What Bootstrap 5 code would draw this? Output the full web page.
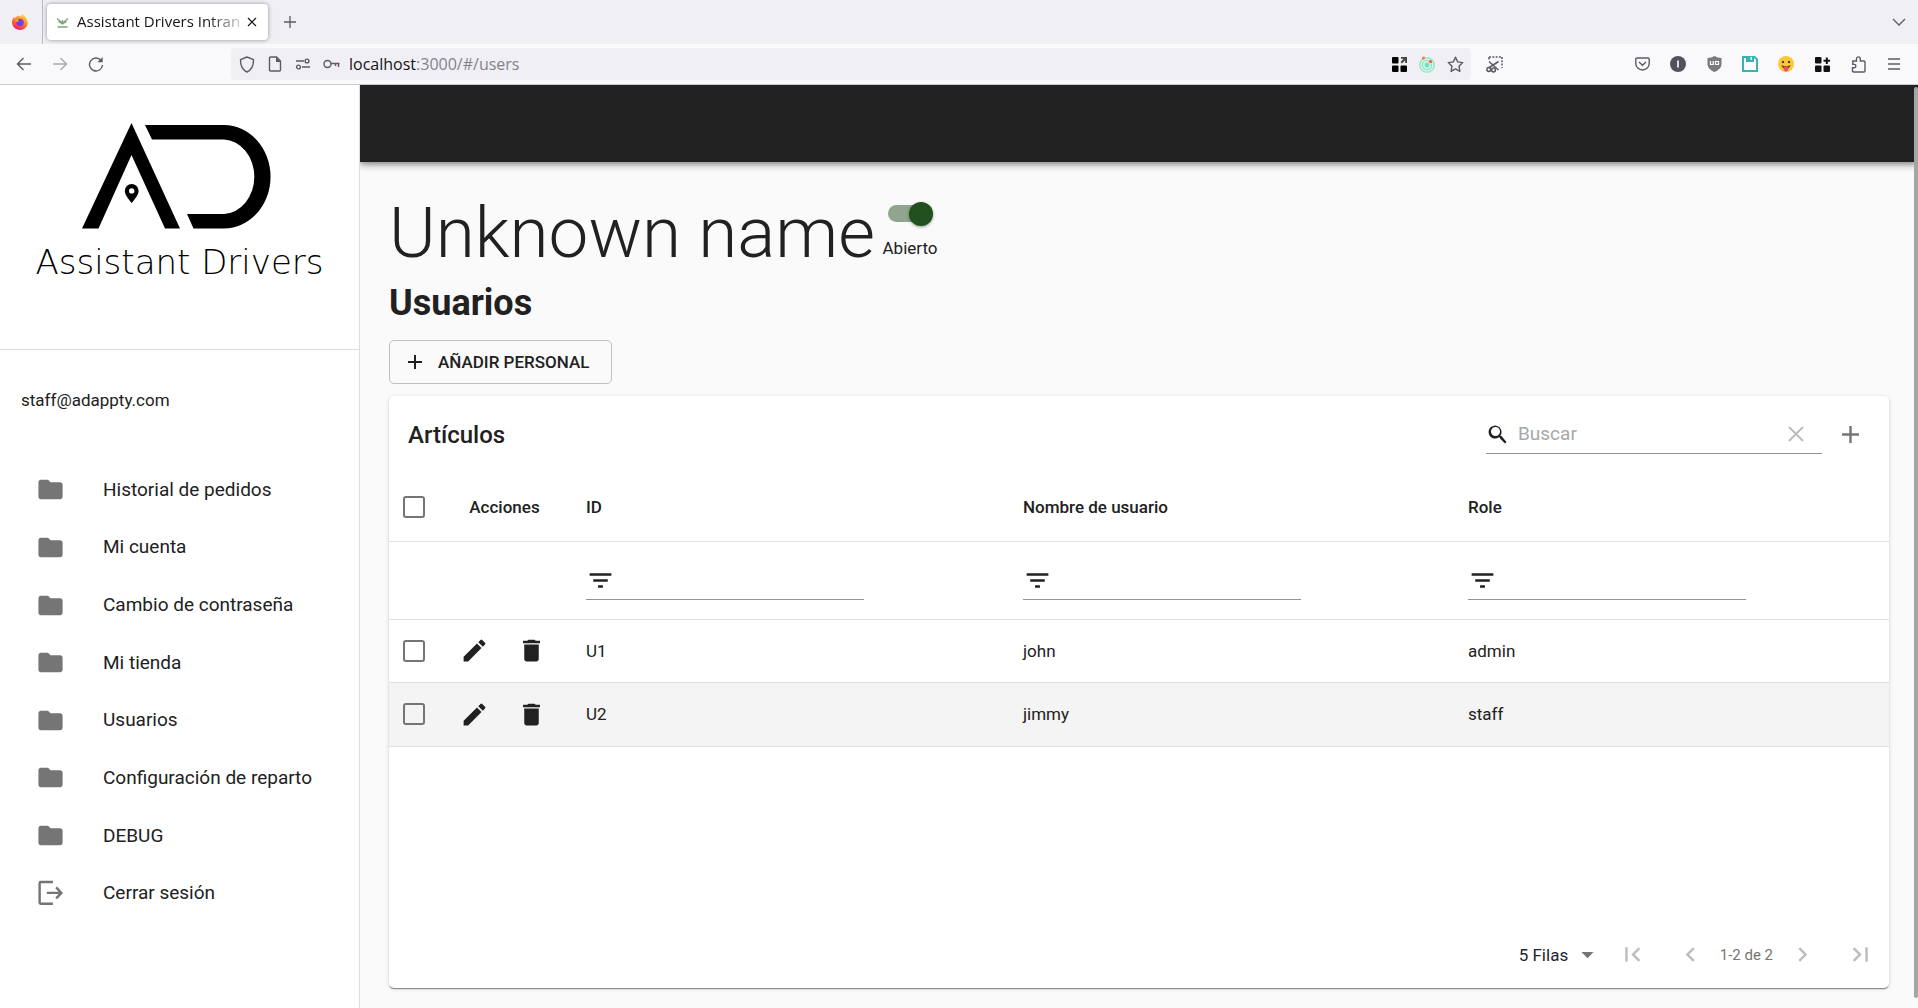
<!DOCTYPE html>
<html lang="es">
<head>
<meta charset="utf-8">
<meta name="viewport" content="width=device-width, initial-scale=1">
<title>Assistant Drivers Intranet</title>
<link href="https://cdn.jsdelivr.net/npm/bootstrap@5.3.0/dist/css/bootstrap.min.css" rel="stylesheet">
<style>
  body { font-family: Roboto, "Liberation Sans", sans-serif; font-size: 17px; line-height: 24px; color: #212121; background: #fafafa; }
  button { font: inherit; color: inherit; }
  svg { display: block; flex: none; }
  .plain-btn { border: 0; background: none; padding: 0; display: flex; align-items: center; justify-content: center; }

  /* Browser frame */
  .browser { font-family: "Open Sans", "Noto Sans", sans-serif; color: #15141a; }
  .tabstrip { height: 44px; background: #f0eff4; }
  .pinned { width: 43px; border-right: 1px solid #b9b9c0; padding-left: 11px; }
  .tab { width: 221px; height: 36px; margin-left: 4px; background: #fff; border-radius: 4px; box-shadow: 0 0 4px rgba(0,0,0,.4); padding: 0 9px; }
  .tab-title { margin-left: 8px; padding-bottom: 2px; font-size: 15px; -webkit-mask-image: linear-gradient(90deg, #000 80%, transparent 105%); mask-image: linear-gradient(90deg, #000 80%, transparent 105%); }
  .toolbar { height: 41px; background: #f9f9fb; border-bottom: 1px solid #ccccd0; }
  .slot { width: 36px; height: 36px; color: #5b5b66; }
  .slot-sm { width: 28px; height: 32px; color: #5b5b66; }
  .nav-tools { width: 231px; padding-left: 6px; }
  .urlbar { height: 32px; background: #f0eff4; border-radius: 4px; margin-right: 5px; padding: 0 2px; }
  .url-field { font-size: 16px; color: #84838c; padding-left: 4px; }
  .url-field b { font-weight: 400; color: #15141a; }
  .ext-tools { margin-left: 112px; padding-right: 6px; }

  /* Sidebar */
  .sidebar { width: 360px; background: #fff; border-right: 1px solid #dedede; }
  .brand { height: 265px; border-bottom: 1px solid #dedede; padding: 37px 0 0; }
  .brand-name { font-family: "DejaVu Sans Light", "DejaVu Sans", sans-serif; font-weight: 200; font-size: 34px; line-height: 40px; margin-top: 12px; color: #000; }
  .user-mail { padding: 38px 21px 49px; }
  .menu { height: 461px; display: grid; grid-auto-rows: 1fr; }
  .menu a { color: #212121; text-decoration: none; font-size: 19px; padding-left: 36px; height: 100%; }
  .menu svg { color: #757575; margin-right: 38px; }

  /* Main */
  .appbar { height: 77px; background: #212121; box-shadow: 0 2px 5px rgba(0,0,0,.3), 0 4px 8px rgba(0,0,0,.2); clip-path: inset(0 0 -16px 0); }
  .content { padding: 28px 29px 20px; }
  .shop-name { font-size: 71px; line-height: 86px; font-weight: 300; margin: 0; }
  .switch-box { width: 70px; padding-top: 11px; }
  .switch { appearance: none; width: 45px; height: 17px; margin: 4px 0; border-radius: 9px; background: #8fa58d; display: flex; align-items: center; justify-content: flex-end; }
  .switch::before { content: ""; width: 24px; height: 24px; flex: none; border-radius: 50%; background: #21501e; box-shadow: 0 1px 3px rgba(0,0,0,.4); }
  .switch-label { margin-top: 10px; }
  .section-title { font-size: 36px; line-height: 43px; font-weight: 700; margin: 6px 0 15px; }
  .add-btn { height: 44px; border: 1px solid #c0c0c0; border-radius: 5px; background: none; font-weight: 500; padding: 0 22px 0 13px; gap: 11px; }
  .panel { margin-top: 12px; background: #fff; border-radius: 5px; box-shadow: 0 2px 1px -1px rgba(0,0,0,.3), 0 1px 1px rgba(0,0,0,.18), 0 1px 4px rgba(0,0,0,.15); }
  .panel-head { height: 77px; padding: 0 24px 0 19px; }
  .panel-title { font-size: 24px; line-height: 30px; font-weight: 500; margin: 0; }
  .line-field { border-bottom: 1px solid #949494; height: 38px; }
  .line-field input { border: 0; outline: 0; background: none; padding: 0; min-width: 0; flex: 1; font-size: 19px; }
  .line-field input::placeholder { color: #a8a8a8; opacity: 1; }
  .search { width: 336px; padding-right: 14px; margin-right: 14px; }
  .filter { width: 278px; margin-top: 2px; }
  .grey-icon { color: #757575; }
  .users { width: 100%; table-layout: fixed; }
  .users th, .users td { padding: 0 19px; border-bottom: 1px solid #e0e0e0; }
  .users th { height: 68px; font-weight: 500; }
  .users .filters td { height: 78px; }
  .users .person td { height: 63px; }
  .users .person:last-child td { height: 64px; background: #f4f4f4; }
  .users .pick { padding: 0 0 0 14px; }
  .users .acts { padding: 0 0 0 3px; }
  .tick { appearance: none; display: block; width: 22px; height: 22px; border: 2px solid #757575; border-radius: 3px; margin: 0; }
  .act { width: 57px; height: 48px; }
  .rows-select { appearance: none; border: 0; background: none; font: inherit; color: inherit; padding: 0; width: 54px; }
  .pager { height: 67px; color: #bdbdbd; padding-right: 14px; }
  .step-gap { width: 29px; }
  .page-info { font-size: 15px; color: #757575; margin: 0 15px; }
  .scroll-thumb { right: 0; top: 87px; bottom: 10px; width: 4px; background: #a5a5a5; border-radius: 2px; }
</style>
</head>
<body>
<svg class="d-none" aria-hidden="true">
  <symbol id="folder" viewBox="0 0 24 24"><path fill="currentColor" d="M10 4H4c-1.100 0-1.990.9-1.990 2L2 18c0 1.100.9 2 2 2h16c1.100 0 2-.9 2-2V8c0-1.100-.9-2-2-2h-8l-2-2z"/></symbol>
  <symbol id="edit" viewBox="0 0 24 24"><path fill="currentColor" d="M3 17.250V21h3.750L17.810 9.940l-3.750-3.750L3 17.250zM20.710 7.040a1 1 0 0 0 0-1.410l-2.340-2.340a1 1 0 0 0-1.410 0l-1.830 1.830 3.750 3.750 1.830-1.830z"/></symbol>
  <symbol id="trash" viewBox="0 0 24 24"><path fill="currentColor" d="M6 19c0 1.100.9 2 2 2h8c1.100 0 2-.9 2-2V7H6v12zM19 4h-3.500l-1-1h-5l-1 1H5v2h14V4z"/></symbol>
  <symbol id="plus" viewBox="0 0 24 24"><path fill="currentColor" d="M19 13h-6v6h-2v-6H5v-2h6V5h2v6h6v2z"/></symbol>
  <symbol id="filter" viewBox="0 0 24 24"><path fill="currentColor" d="M10 18h4v-2h-4v2zM3 6v2h18V6H3zm3 7h12v-2H6v2z"/></symbol>
  <symbol id="left" viewBox="0 0 24 24"><path fill="currentColor" d="M15.410 7.410 14 6l-6 6 6 6 1.410-1.410L10.830 12z"/></symbol>
  <symbol id="right" viewBox="0 0 24 24"><path fill="currentColor" d="M10 6 8.590 7.410 13.170 12l-4.580 4.590L10 18l6-6z"/></symbol>
  <symbol id="first" viewBox="0 0 24 24"><path fill="currentColor" d="M18.410 16.590 13.820 12l4.590-4.590L17 6l-6 6 6 6zM6 6h2v12H6z"/></symbol>
  <symbol id="last" viewBox="0 0 24 24"><path fill="currentColor" d="M5.590 7.410 10.180 12l-4.590 4.590L7 18l6-6-6-6zM16 6h2v12h-2z"/></symbol>
</svg>

<div class="min-vh-100 d-flex flex-column position-relative">
  <header class="browser">
    <div class="tabstrip d-flex align-items-center">
      <div class="pinned h-100 d-flex align-items-center">
        <svg width="18" height="18" viewBox="0 0 18 18"><defs><linearGradient id="fx" x1=".8" y1="0" x2=".3" y2="1"><stop offset="0" stop-color="#ffe83a"/><stop offset=".45" stop-color="#ff8a1e"/><stop offset="1" stop-color="#f5156c"/></linearGradient></defs><path fill="url(#fx)" d="M11 1c2 1.500 5 4.200 5.600 7.500.7 4.800-2.900 8.500-7.400 8.500C4.600 17 1 13.700 1 9.300c0-2.400.9-4.200 2-5.600l.6 1.700L6 3.200c1-.6 2.800-.4 4.200.6C10.200 2.700 10.400 1.700 11 1z"/><circle cx="9" cy="9.500" r="3.700" fill="#7a3be0"/><path fill="#ff9a20" d="M3.800 7c1.600-1.500 3.200-.8 4.800.2-1.300.2-1.600 1-1.300 1.800-2 0-3.200-.6-3.500-2z"/></svg>
      </div>
      <div class="tab d-flex align-items-center">
        <svg width="13" height="13" viewBox="0 0 13 13" fill="none" stroke="#7fa57c"><path d="M1 2.500 4 5l2.500 2.500L9 5l3-2.500M2.500 5.500 6.500 8l4-2.500M6.500 4v4" stroke-width="1.300"/><path d="M1.500 11h10" stroke-width="1.500"/></svg>
        <div class="tab-title text-nowrap">Assistant Drivers Intran</div>
        <button class="plain-btn ms-auto" aria-label="Cerrar pestaña"><svg width="14" height="14" viewBox="0 0 14 14" stroke="#15141a" stroke-width="1.200"><path d="m3 3 8 8M11 3l-8 8"/></svg></button>
      </div>
      <button class="plain-btn slot ms-1" aria-label="Nueva pestaña"><svg width="14" height="14" viewBox="0 0 14 14" stroke="currentColor" stroke-width="1.300"><path d="M1 7h12M7 1v12"/></svg></button>
      <button class="plain-btn slot ms-auto" aria-label="Lista de pestañas"><svg width="16" height="16" viewBox="0 0 16 16" fill="none" stroke="currentColor" stroke-width="1.300"><path d="m1 5 6 6 6-6"/></svg></button>
    </div>
    <div class="toolbar d-flex align-items-center">
      <div class="nav-tools d-flex">
        <button class="plain-btn slot" aria-label="Atrás"><svg width="16" height="16" viewBox="0 0 16 16" fill="none" stroke="currentColor" stroke-width="1.400"><path d="M15 8H1.500M7.500 2l-6 6 6 6"/></svg></button>
        <button class="plain-btn slot opacity-50" aria-label="Adelante"><svg width="16" height="16" viewBox="0 0 16 16" fill="none" stroke="currentColor" stroke-width="1.400"><path d="M1 8h13.500M8.500 2l6 6-6 6"/></svg></button>
        <button class="plain-btn slot" aria-label="Recargar"><svg width="16" height="16" viewBox="0 0 16 16" fill="none" stroke="currentColor" stroke-width="1.400"><path d="M13.500 5A6.500 6.500 0 1 0 14.500 9"/><path d="M14.700 1v5.300H9.400z" fill="currentColor" stroke="none"/></svg></button>
      </div>
      <div class="urlbar flex-grow-1 d-flex align-items-center">
        <span class="plain-btn slot-sm"><svg width="16" height="17" viewBox="0 0 16 17" fill="none" stroke="currentColor" stroke-width="1.400"><path d="M8 1 14.500 3.700C14.600 9 13 13.500 8 16 3 13.500 1.400 9 1.500 3.700z" stroke-linejoin="round"/></svg></span>
        <span class="plain-btn slot-sm"><svg width="14" height="16" viewBox="0 0 14 16" fill="none" stroke="currentColor" stroke-width="1.400"><path d="M2.500 1h6L12.500 5v9q0 1-1 1h-9q-1 0-1-1V2q0-1 1-1z"/><path d="M8 1v5h5z" fill="currentColor" stroke="none"/></svg></span>
        <span class="plain-btn slot-sm"><svg width="16" height="14" viewBox="0 0 16 14" fill="none" stroke="currentColor" stroke-width="1.400"><path d="M1 4h8M7 10h8"/><circle cx="12" cy="4" r="1.900"/><circle cx="3.500" cy="10" r="1.900"/></svg></span>
        <span class="plain-btn slot-sm"><svg width="17" height="10" viewBox="0 0 17 10" fill="none" stroke="currentColor" stroke-width="1.400"><circle cx="4.500" cy="5" r="3.500"/><path d="M8 4.500h8.500M15.500 4.500v3.500M12.500 4.500V7"/></svg></span>
        <div class="url-field"><b>localhost</b>:3000/#/users</div>
        <button class="plain-btn slot-sm ms-auto" aria-label="Abrir en cuadrícula"><svg width="15" height="15" viewBox="0 0 15 15" fill="#000"><rect width="6.500" height="6.500" rx="1"/><rect y="8.500" width="6.500" height="6.500" rx="1"/><rect x="8.500" y="8.500" width="6.500" height="6.500" rx="1"/><path d="M9 0h6v6h-1.800V3.200L10 6.500 8.600 5l3-3.200H9z" fill="#444"/></svg></button>
        <button class="plain-btn slot-sm" aria-label="Radar"><svg width="16" height="17" viewBox="0 0 16 17" fill="none" stroke="#7deabc" stroke-width="1.300"><circle cx="8" cy="9" r="7.200"/><circle cx="8" cy="9" r="4.600"/><circle cx="8" cy="9" r="2" fill="#5fe6ae"/><circle cx="4.500" cy="2" r="1.600" fill="#ff7a45" stroke="none"/><circle cx="11.500" cy="5.500" r="1.600" fill="#ff5040" stroke="none"/></svg></button>
        <button class="plain-btn slot-sm" aria-label="Marcador"><svg width="17" height="17" viewBox="0 0 17 17" fill="none" stroke="currentColor" stroke-width="1.400" stroke-linejoin="round"><path d="m8.500 1.200 2.200 4.700 5 .7-3.700 3.600.9 5.200-4.400-2.500-4.400 2.500.9-5.200L1.300 6.600l5-.7z"/></svg></button>
      </div>
      <button class="plain-btn slot" aria-label="Captura"><svg width="17" height="17" viewBox="0 0 17 17" fill="none" stroke="currentColor" stroke-width="1.500"><path d="M3 1h13M16 1v11" stroke-dasharray="2 1.300"/><path d="M3 5.500 12.500 14M2.500 12 12.500 5.500"/><circle cx="2.800" cy="13.500" r="1.900"/><circle cx="7.500" cy="14" r="1.900"/><path d="M3 1v2.500"/></svg></button>
      <div class="ext-tools d-flex">
        <button class="plain-btn slot" aria-label="Pocket"><svg width="15" height="14" viewBox="0 0 15 14" fill="none" stroke="currentColor" stroke-width="1.400"><path d="M2 1h11q1.200 0 1.200 1.200V6.500a6.700 6.500 0 0 1-13.400 0V2.200Q.8 1 2 1z"/><path d="m4 5 3.500 3.300L11 5"/></svg></button>
        <button class="plain-btn slot" aria-label="Información"><svg width="16" height="16" viewBox="0 0 16 16"><circle cx="8" cy="8" r="8" fill="#52525e"/><path d="M8 4.500v7" stroke="#fff" stroke-width="1.600"/></svg></button>
        <button class="plain-btn slot" aria-label="Bloqueador"><svg width="15" height="16" viewBox="0 0 15 16"><path fill="#7b7b7b" d="M7.500 0q3 2 7 2v6c0 4-3.500 6.500-7 8-3.500-1.500-7-4-7-8V2q4 0 7-2z"/><path d="M3.500 5v3.500h2.700V5M8.500 5v3.500h3V5.500h-3" fill="none" stroke="#fff" stroke-width="1.200"/></svg></button>
        <button class="plain-btn slot" aria-label="Guardar"><svg width="16" height="16" viewBox="0 0 16 16"><path d="M1 1h11.500L15 3.500V15H1z" fill="#fff" stroke="#37b3b4" stroke-width="2"/><path fill="#37b3b4" d="M4 0h8v6H4z"/><path fill="#fff" d="M8.500 1h1.500v3H8.500z"/></svg></button>
        <button class="plain-btn slot" aria-label="Emoji"><svg width="16" height="16" viewBox="0 0 16 16"><circle cx="8" cy="8" r="8" fill="#fbc83c"/><circle cx="5" cy="6" r="1.200" fill="#5c3d12"/><circle cx="11" cy="6" r="1.200" fill="#5c3d12"/><path d="M3.500 9q4.500 2.500 9 0-1 4-4.500 4t-4.500-4z" fill="#6b3b16"/><path d="M5.800 10.500h4.400v3q-.3 2-2.200 2t-2.200-2z" fill="#f44a71"/></svg></button>
        <button class="plain-btn slot" aria-label="Cuadrícula"><svg width="15" height="15" viewBox="0 0 15 15" fill="#111"><rect width="6.500" height="6.500" rx="1"/><rect y="8.500" width="6.500" height="6.500" rx="1"/><rect x="8.500" y="8.500" width="6.500" height="6.500" rx="1"/><path d="M10.800.5h2v2.200H15v2h-2.200V7h-2V4.700H8.500v-2h2.300z"/></svg></button>
        <button class="plain-btn slot" aria-label="Extensiones"><svg width="15" height="17" viewBox="0 0 15 17" fill="none" stroke="currentColor" stroke-width="1.400"><path d="M1.800 5h3.700V2.800a1.900 1.900 0 0 1 3.800 0V5h3.700q1 0 1 1v9q0 1-1 1H2.500q-1 0-1-1v-3.200h1.700a1.700 1.700 0 0 0 0-3.400H1.800z"/></svg></button>
        <button class="plain-btn slot" aria-label="Menú"><svg width="14" height="14" viewBox="0 0 14 14" stroke="currentColor" stroke-width="1.300"><path d="M1 2h12M1 7h12M1 12h12"/></svg></button>
      </div>
    </div>
  </header>

  <div class="flex-grow-1 d-flex">
    <aside class="sidebar flex-shrink-0">
      <div class="brand d-flex flex-column align-items-center">
        <svg width="200" height="108" viewBox="80 122 200 108"><path d="M131.500 123 180 228.500h-15L131.500 155 98.500 228.500H82z"/><path d="M145 125h79a46.500 51.700 0 0 1 0 103.500h-30.500L187 214h37a32 37.300 0 0 0 0-74.500h-72z"/><path fill-rule="evenodd" d="M131.700 184a6.900 6.900 0 0 1 6.900 6.900c0 3.600-3.400 7.600-6.900 12.100-3.500-4.500-6.900-8.500-6.900-12.100a6.900 6.900 0 0 1 6.900-6.900zm0 4.200a2.700 2.700 0 1 0 0 5.400 2.700 2.700 0 0 0 0-5.400z"/></svg>
        <div class="brand-name text-nowrap">Assistant Drivers</div>
      </div>
      <div class="user-mail">staff@adappty.com</div>
      <ul class="menu list-unstyled m-0">
        <li><a href="#" class="d-flex align-items-center"><svg width="29" height="29"><use href="#folder"/></svg>Historial de pedidos</a></li>
        <li><a href="#" class="d-flex align-items-center"><svg width="29" height="29"><use href="#folder"/></svg>Mi cuenta</a></li>
        <li><a href="#" class="d-flex align-items-center"><svg width="29" height="29"><use href="#folder"/></svg>Cambio de contraseña</a></li>
        <li><a href="#" class="d-flex align-items-center"><svg width="29" height="29"><use href="#folder"/></svg>Mi tienda</a></li>
        <li><a href="#" class="d-flex align-items-center"><svg width="29" height="29"><use href="#folder"/></svg>Usuarios</a></li>
        <li><a href="#" class="d-flex align-items-center"><svg width="29" height="29"><use href="#folder"/></svg>Configuración de reparto</a></li>
        <li><a href="#" class="d-flex align-items-center"><svg width="29" height="29"><use href="#folder"/></svg>DEBUG</a></li>
        <li><a href="#" class="d-flex align-items-center"><svg width="29" height="29" viewBox="0 0 24 24" fill="none" stroke="currentColor" stroke-width="2"><path d="M14 2.500H4Q3 2.500 3 3.500v16q0 1 1 1h10M9 11.500h12M16.700 7l4.300 4.500-4.300 4.500"/></svg>Cerrar sesión</a></li>
      </ul>
    </aside>

    <main class="flex-grow-1 d-flex flex-column">
      <div class="appbar"></div>
      <div class="content flex-grow-1 d-flex flex-column">
        <div class="d-flex">
          <h1 class="shop-name">Unknown name</h1>
          <div class="switch-box d-flex flex-column align-items-center">
            <input class="switch" type="checkbox" role="switch" id="open" checked>
            <label for="open" class="switch-label">Abierto</label>
          </div>
        </div>
        <h2 class="section-title">Usuarios</h2>
        <div class="d-flex"><button class="add-btn d-flex align-items-center"><svg width="24" height="24"><use href="#plus"/></svg>AÑADIR PERSONAL</button></div>

        <section class="panel flex-grow-1 d-flex flex-column">
          <div class="panel-head d-flex align-items-center">
            <h3 class="panel-title">Artículos</h3>
            <div class="search line-field d-flex align-items-center ms-auto">
              <svg class="me-2" width="24" height="24" viewBox="0 0 24 24"><path fill="currentColor" d="M15.500 14h-.79l-.28-.27A6.500 6.500 0 1 0 13 15.240l1 .55v.79l5 4.990L20.490 20zm-6 0a4.500 4.500 0 1 1 0-9 4.500 4.500 0 0 1 0 9z"/></svg>
              <input type="text" placeholder="Buscar" aria-label="Buscar">
              <button class="plain-btn" aria-label="Borrar búsqueda"><svg width="24" height="24" viewBox="0 0 24 24" stroke="#bdbdbd" stroke-width="2"><path d="m5 5 14 14M19 5 5 19"/></svg></button>
            </div>
            <button class="plain-btn grey-icon" aria-label="Añadir"><svg width="29" height="29"><use href="#plus"/></svg></button>
          </div>
          <table class="users">
            <colgroup><col style="width:50px"><col style="width:128px"><col style="width:437px"><col style="width:445px"><col></colgroup>
            <thead>
              <tr><th class="pick"><input class="tick" type="checkbox" aria-label="Seleccionar todo"></th><th class="acts text-center">Acciones</th><th>ID</th><th>Nombre de usuario</th><th>Role</th></tr>
            </thead>
            <tbody>
              <tr class="filters"><td></td><td></td>
                <td><div class="filter line-field d-flex align-items-center"><svg width="29" height="29"><use href="#filter"/></svg><input type="text" aria-label="Filtrar ID"></div></td>
                <td><div class="filter line-field d-flex align-items-center"><svg width="29" height="29"><use href="#filter"/></svg><input type="text" aria-label="Filtrar nombre de usuario"></div></td>
                <td><div class="filter line-field d-flex align-items-center"><svg width="29" height="29"><use href="#filter"/></svg><input type="text" aria-label="Filtrar role"></div></td>
              </tr>
              <tr class="person"><td class="pick"><input class="tick" type="checkbox" aria-label="Seleccionar U1"></td>
                <td class="acts"><div class="d-flex ms-1"><button class="plain-btn act" aria-label="Editar U1"><svg width="29" height="29"><use href="#edit"/></svg></button><button class="plain-btn act" aria-label="Eliminar U1"><svg width="29" height="29"><use href="#trash"/></svg></button></div></td>
                <td>U1</td><td>john</td><td>admin</td></tr>
              <tr class="person"><td class="pick"><input class="tick" type="checkbox" aria-label="Seleccionar U2"></td>
                <td class="acts"><div class="d-flex ms-1"><button class="plain-btn act" aria-label="Editar U2"><svg width="29" height="29"><use href="#edit"/></svg></button><button class="plain-btn act" aria-label="Eliminar U2"><svg width="29" height="29"><use href="#trash"/></svg></button></div></td>
                <td>U2</td><td>jimmy</td><td>staff</td></tr>
            </tbody>
          </table>
          <div class="pager d-flex align-items-center justify-content-end mt-auto">
            <div class="d-flex align-items-center text-body me-3">
              <select class="rows-select" aria-label="Filas por página"><option>5 Filas</option></select>
              <svg width="29" height="29" viewBox="0 0 24 24"><path fill="#757575" d="m7 10 5 5 5-5z"/></svg>
            </div>
            <button class="plain-btn" aria-label="Primera página"><svg width="29" height="29"><use href="#first"/></svg></button>
            <div class="step-gap"></div>
            <button class="plain-btn" aria-label="Página anterior"><svg width="29" height="29"><use href="#left"/></svg></button>
            <span class="page-info">1-2 de 2</span>
            <button class="plain-btn" aria-label="Página siguiente"><svg width="29" height="29"><use href="#right"/></svg></button>
            <div class="step-gap"></div>
            <button class="plain-btn" aria-label="Última página"><svg width="29" height="29"><use href="#last"/></svg></button>
          </div>
        </section>
      </div>
    </main>
  </div>
  <div class="scroll-thumb position-absolute"></div>
</div>
<script src="https://cdn.jsdelivr.net/npm/bootstrap@5.3.0/dist/js/bootstrap.bundle.min.js"></script>
</body>
</html>
